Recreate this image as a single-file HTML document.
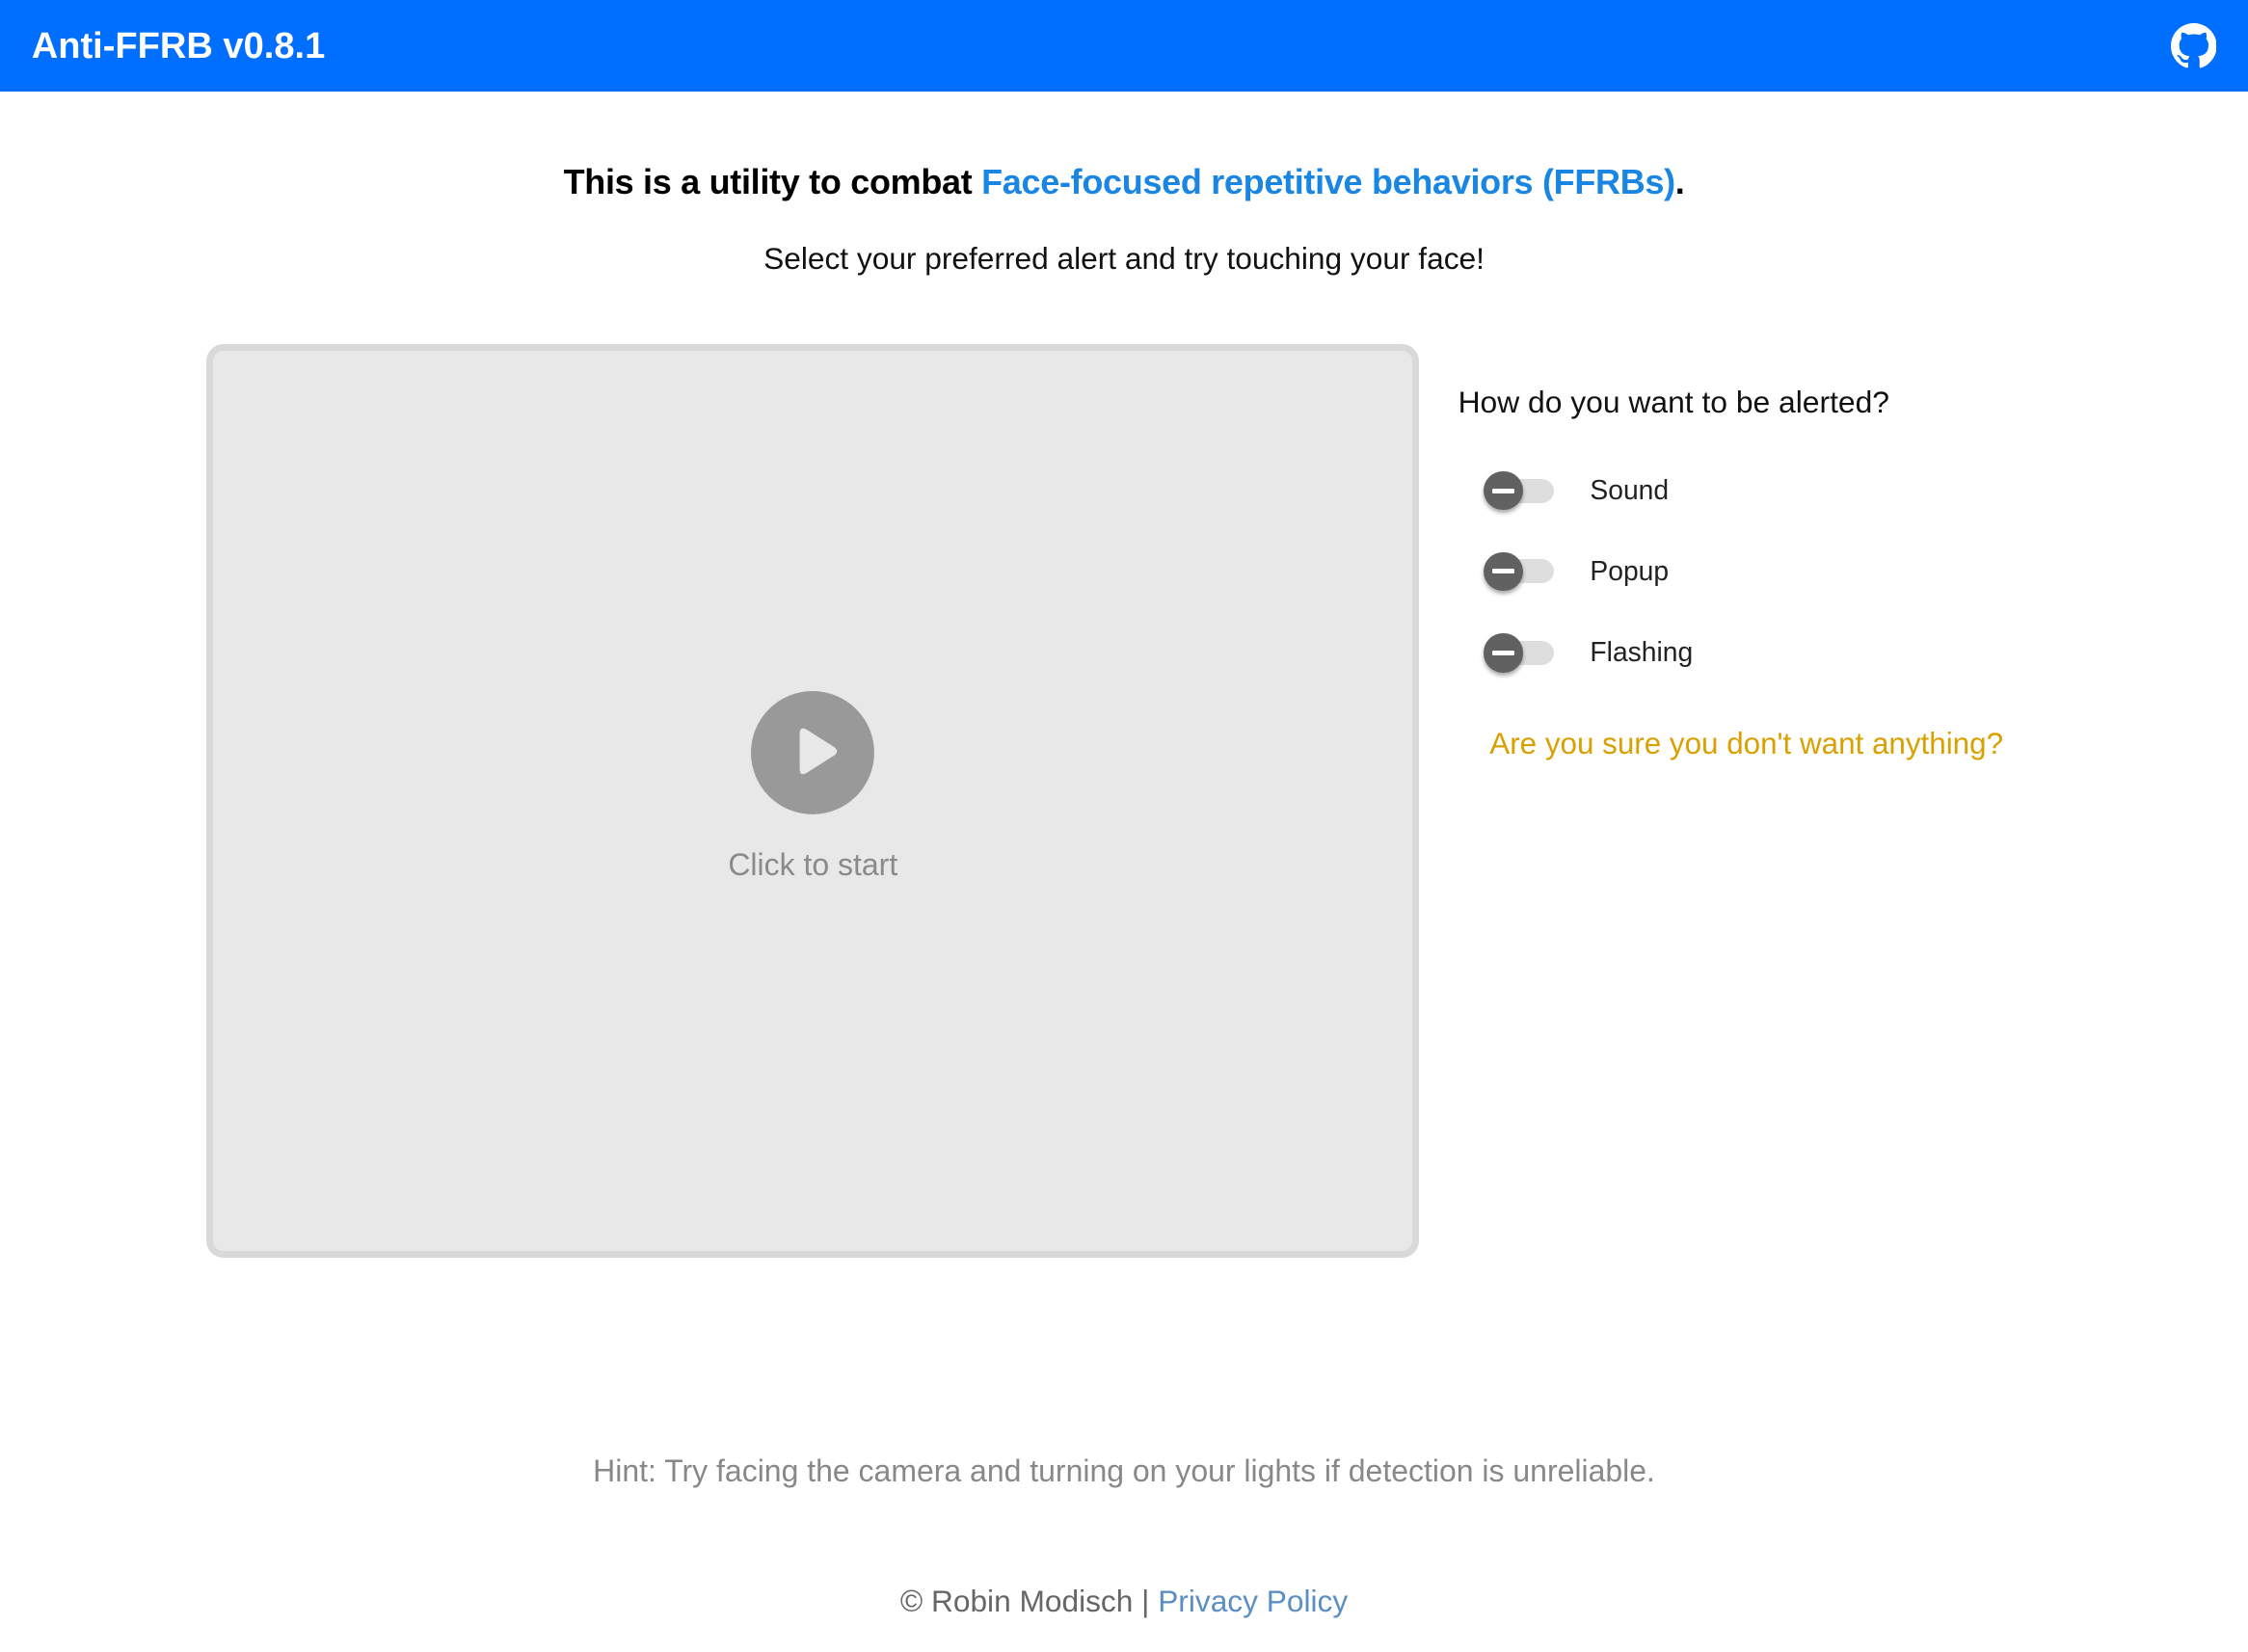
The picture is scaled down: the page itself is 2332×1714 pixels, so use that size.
<!DOCTYPE html>
<html><head><meta charset="utf-8"><style>
html,body{margin:0;padding:0;background:#fff;}
body{width:2332px;height:1714px;overflow:hidden;}
#w{zoom:1.4873;width:1568px;height:1152px;position:relative;font-family:"Liberation Sans",sans-serif;}
.a{position:absolute;white-space:nowrap;}
.hdr{position:absolute;left:0;top:0;width:1568px;height:64px;background:#006efe;}
.c{left:0;width:1568px;text-align:center;}
.tog{position:absolute;left:1037px;width:47px;height:17px;border-radius:9px;background:#dedede;}
.th{position:absolute;left:-2px;top:-5px;width:27px;height:27px;border-radius:50%;background:#616161;box-shadow:0 2px 3px rgba(0,0,0,.35);}
.th:after{content:"";position:absolute;left:6px;top:12px;width:15px;height:3px;background:#fff;border-radius:1px;}
.lab{left:1109px;font-size:19px;color:#222;}
</style></head><body><div id="w">
<div class="hdr"></div>
<div class="a" style="left:22px;top:18px;font-size:25.6px;font-weight:bold;color:#fff;">Anti-FFRB v0.8.1</div>
<svg class="a" style="left:1514px;top:16px" width="32" height="32" viewBox="0 0 16 16"><path fill="#fff" d="M8 0C3.580 0 0 3.58 0 8c0 3.54 2.290 6.530 5.470 7.590.4.070.55-.170.55-.38 0-.19-.01-.82-.01-1.49-2.010.37-2.530-.49-2.690-.94-.09-.23-.48-.94-.82-1.130-.28-.15-.68-.52-.01-.53.63-.01 1.080.58 1.230.82.72 1.210 1.870.87 2.330.66.07-.52.28-.87.51-1.070-1.780-.2-3.640-.89-3.640-3.950 0-.87.31-1.590.82-2.150-.08-.2-.36-1.020.08-2.120 0 0 .67-.21 2.200.82.64-.18 1.320-.27 2-.27.68 0 1.360.09 2 .27 1.530-1.040 2.200-.82 2.200-.82.44 1.100.16 1.920.08 2.120.51.56.82 1.270.82 2.150 0 3.070-1.870 3.750-3.650 3.950.29.25.54.73.54 1.480 0 1.070-.01 1.930-.01 2.200 0 .21.15.46.55.38A8.013 8.013 0 0016 8c0-4.420-3.580-8-8-8z"/></svg>
<div class="a c" style="top:113px;font-size:24.2px;font-weight:bold;color:#000;letter-spacing:-0.2px;">This is a utility to combat <span style="color:#1a86e3">Face-focused repetitive behaviors (FFRBs)</span>.</div>
<div class="a c" style="top:168px;font-size:21.3px;color:#111;">Select your preferred alert and try touching your face!</div>
<div class="a" style="left:144px;top:240px;width:836px;height:628px;border:5px solid #d9d9d9;border-radius:12px;background:#e8e8e8;"></div>
<svg class="a" style="left:524px;top:482px" width="86" height="86" viewBox="0 0 86 86"><circle cx="43" cy="43" r="43" fill="#999"/><path d="M34 30 Q34 24 39 27 L58 39 Q62 42 58 45 L39 57 Q34 60 34 54 Z" fill="#e8e8e8"/></svg>
<div class="a" style="left:144px;width:846px;text-align:center;top:591px;font-size:21.5px;color:#8a8a8a;">Click to start</div>
<div class="a" style="left:1017px;top:268px;font-size:21.4px;color:#111;">How do you want to be alerted?</div>
<div class="tog" style="top:334px"><div class="th"></div></div>
<div class="a lab" style="top:331px">Sound</div>
<div class="tog" style="top:390px"><div class="th"></div></div>
<div class="a lab" style="top:387px">Popup</div>
<div class="tog" style="top:447px"><div class="th"></div></div>
<div class="a lab" style="top:444px">Flashing</div>
<div class="a" style="left:1039px;top:507px;font-size:21.1px;color:#d9a000;">Are you sure you don't want anything?</div>
<div class="a c" style="top:1014px;font-size:21.5px;color:#888;">Hint: Try facing the camera and turning on your lights if detection is unreliable.</div>
<div class="a c" style="top:1105px;font-size:21.3px;color:#666;">© Robin Modisch | <span style="color:#5b8fc4">Privacy Policy</span></div>
</div></body></html>
